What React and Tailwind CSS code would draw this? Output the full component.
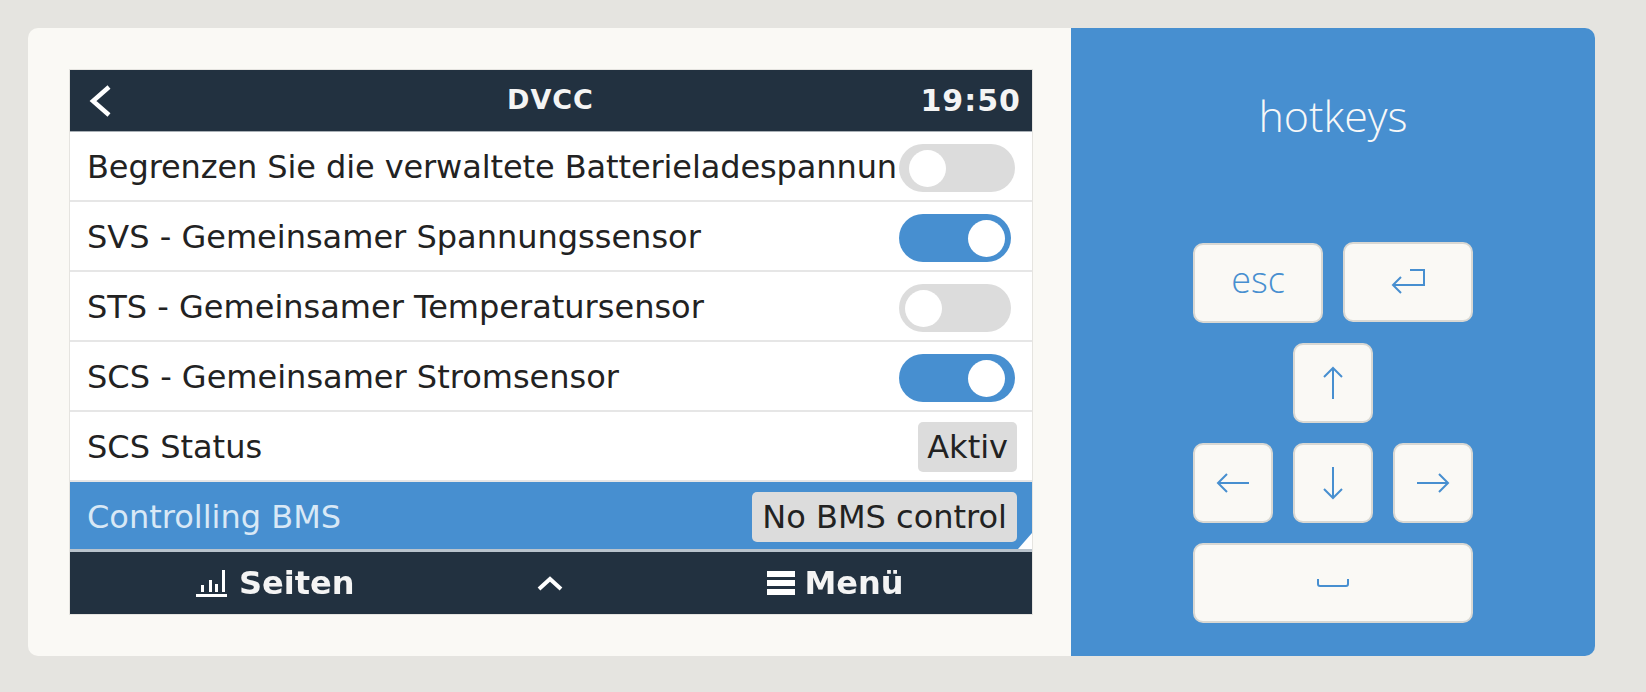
const SANS = "font-['DejaVu_Sans',sans-serif]";

function Toggle({ on, wide }) {
  const size = wide ? "w-[116px] mr-[17px]" : "w-[112px] mr-[21px]";
  const knob = on
    ? wide ? "justify-end pr-[10px] bg-[#478fd0]" : "justify-end pr-[6px] bg-[#478fd0]"
    : wide ? "justify-start pl-[10px] bg-[#dcdcdc]" : "justify-start pl-[6px] bg-[#dcdcdc]";
  return (
    <div className={`flex h-[48px] shrink-0 items-center rounded-full ${size} ${knob}`}>
      <div className="h-[37px] w-[37px] rounded-full bg-white" />
    </div>
  );
}

function Row({ label, children, tight }) {
  return (
    <div className="flex h-[70px] items-center justify-between border-b-2 border-[#e6e6e6] bg-white pl-[17px] pt-[4px]">
      <span className={`-mt-[2px] whitespace-nowrap text-[32px] leading-[40px] text-[#222] ${tight ? "tracking-[-0.1px]" : ""}`}>{label}</span>
      {children}
    </div>
  );
}

function Key({ w = "w-[80px]", children, extra = "" }) {
  return (
    <div className={`flex h-[80px] ${w} items-center justify-center rounded-[10px] border-2 border-[#d9d8d3] bg-[#faf9f5] ${extra}`}>
      {children}
    </div>
  );
}

const Arrow = ({ d }) => (
  <svg width="40" height="40" viewBox="0 0 40 40" fill="none" stroke="#478fd0" strokeWidth="2">
    <path d={d} />
  </svg>
);

export default function App() {
  return (
    <div className="h-[692px] w-[1646px] overflow-hidden bg-[#e5e4e0] pl-[28px] pt-[28px]">
      <div className="flex h-[628px] w-[1567px] overflow-hidden rounded-[10px]">
        <div className="h-full w-[1043px] bg-[#faf9f5] pl-[41px] pt-[41px]">
          <div className={`h-[546px] w-[964px] border border-[#e5e4e0] blur-[0.6px] ${SANS}`}>
            <div className="relative flex h-[62px] items-center justify-between border-b border-[#a9b0b6] bg-[#223140] pl-[18px] pr-[11px]">
              <svg width="24" height="34" viewBox="0 0 24 34" fill="none" stroke="#fff" strokeWidth="4.5">
                <path d="M21 3 L5 17 L21 31" />
              </svg>
              <span className="absolute left-[437px] top-[13px] text-[27px] font-bold leading-[34px] tracking-[1px] text-[#f4f4f4]">DVCC</span>
              <span className="text-[30px] font-bold leading-[38px] tracking-[1px] text-[#f4f4f4]">19:50</span>
            </div>
            <Row tight label="Begrenzen Sie die verwaltete Batterieladespannun"><Toggle wide /></Row>
            <Row label="SVS - Gemeinsamer Spannungssensor"><Toggle on /></Row>
            <Row label="STS - Gemeinsamer Temperatursensor"><Toggle /></Row>
            <Row label="SCS - Gemeinsamer Stromsensor"><Toggle on wide /></Row>
            <Row label="SCS Status">
              <div className="mr-[15px] -mt-[2px] flex h-[50px] items-center rounded-[5px] bg-[#dcdcdc] px-[9px] text-[32px] leading-[40px] text-[#222]">Aktiv</div>
            </Row>
            <div className="relative flex h-[70px] items-center justify-between border-b-[3px] border-[#b9c3cc] bg-[#478fd0] pl-[17px] pt-[2px]">
              <span className="text-[32px] leading-[40px] text-[#d8e8f6]">Controlling BMS</span>
              <div className="mr-[15px] flex h-[50px] items-center rounded-[5px] bg-[#dcdcdc] px-[10px] text-[32px] leading-[40px] text-[#222]">No BMS control</div>
              <div className="absolute bottom-0 right-0 h-0 w-0 border-b-[16px] border-l-[14px] border-b-white border-l-transparent" />
            </div>
            <div className="flex h-[62px] items-center bg-[#223140] pl-[126px] text-[#f4f4f4]">
              <svg width="31" height="28" viewBox="0 0 31 28" fill="#fff" className="mr-[12px]">
                <rect x="0" y="25" width="31" height="3" />
                <rect x="5" y="16" width="3" height="7" />
                <rect x="13" y="11" width="3" height="12" />
                <rect x="19" y="15" width="3" height="8" />
                <rect x="26" y="1" width="3" height="22" />
              </svg>
              <span className="text-[32px] font-bold leading-[40px]">Seiten</span>
              <svg width="26" height="16" viewBox="0 0 26 16" fill="none" stroke="#fff" strokeWidth="4" className="ml-[182px]">
                <path d="M2 14 L13 4 L24 14" />
              </svg>
              <svg width="28" height="24" viewBox="0 0 28 24" fill="#fff" className="ml-[204px] mr-[10px]">
                <rect y="0" width="28" height="6" />
                <rect y="9" width="28" height="6" />
                <rect y="18" width="28" height="6" />
              </svg>
              <span className="text-[32px] font-bold leading-[40px]">Menü</span>
            </div>
          </div>
        </div>
        <div className="flex h-full flex-1 flex-col items-center bg-[#478fd0] font-['Open_Sans',sans-serif]">
          <div className="mt-[63px] text-[43px] font-light leading-[50px] text-[#f7f8f8]">hotkeys</div>
          <div className="mt-[102px] flex flex-col gap-[20px]">
            <div className="flex gap-[20px]">
              <Key w="w-[130px]"><span className="-mt-[6px] text-[36px] font-light leading-[40px] text-[#478fd0]">esc</span></Key>
              <Key w="w-[130px]" extra="-mt-px">
                <Arrow d="M5 23 H36 V8 H22 M13 15 L5 23 L13 31" />
              </Key>
            </div>
            <div className="flex justify-center">
              <Key><Arrow d="M20 36 V5 M11 14 L20 5 L29 14" /></Key>
            </div>
            <div className="flex gap-[20px]">
              <Key><Arrow d="M36 20 H5 M14 11 L5 20 L14 29" /></Key>
              <Key><Arrow d="M20 4 V35 M11 26 L20 35 L29 26" /></Key>
              <Key><Arrow d="M4 20 H35 M26 11 L35 20 L26 29" /></Key>
            </div>
            <Key w="w-[280px]"><Arrow d="M5 16 V21 Q5 23 7 23 H33 Q35 23 35 21 V16" /></Key>
          </div>
        </div>
      </div>
    </div>
  );
}
